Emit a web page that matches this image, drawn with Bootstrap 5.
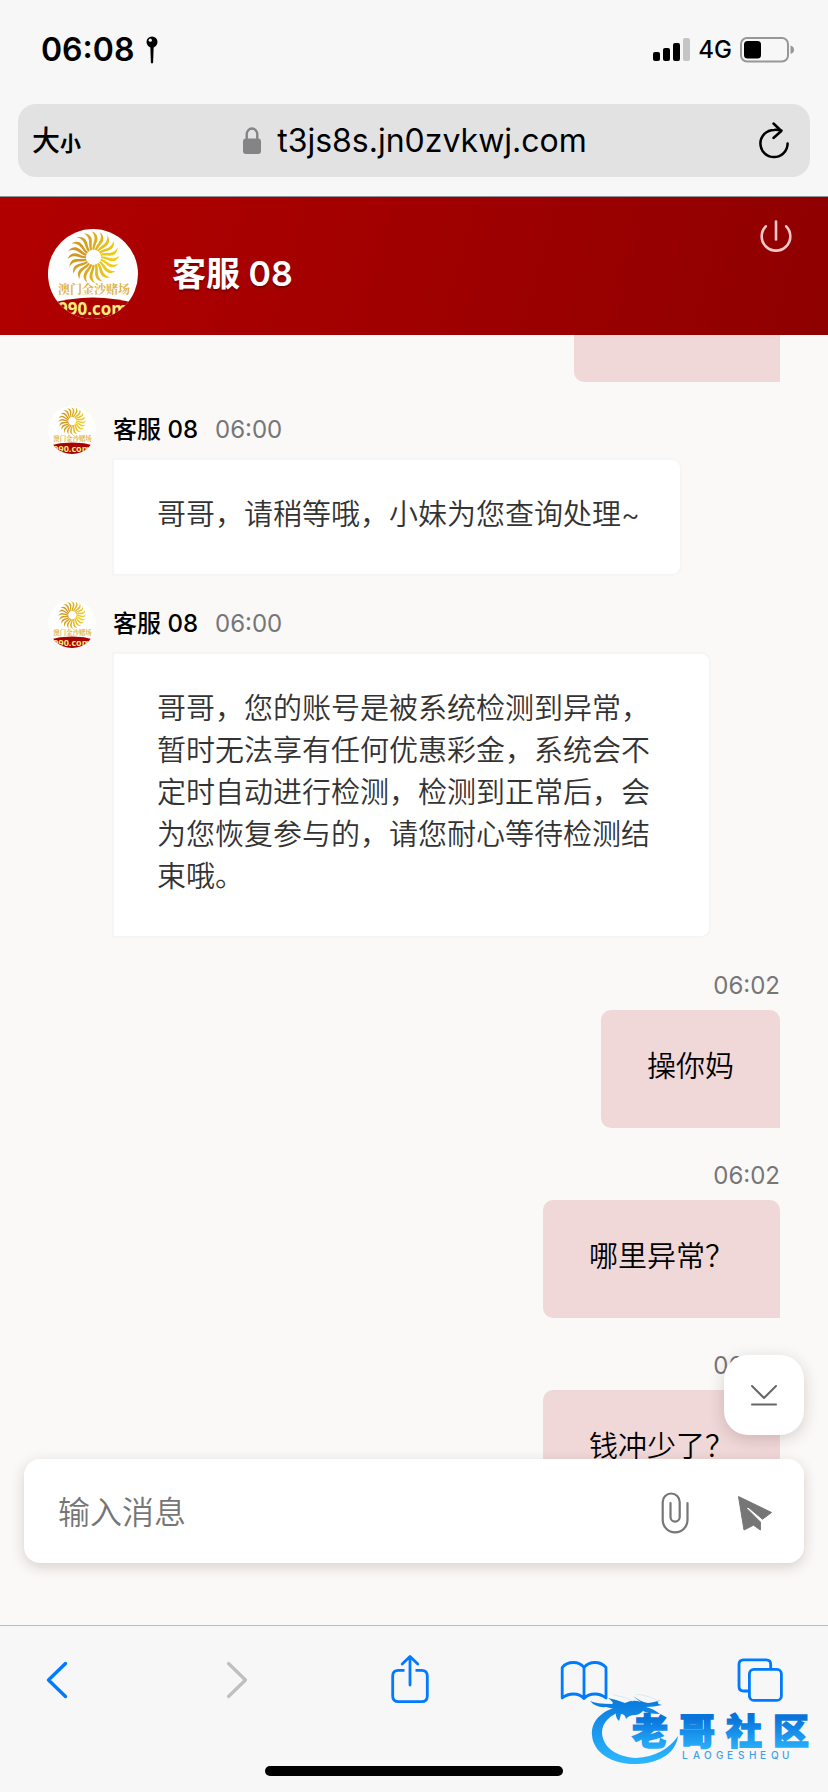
<!DOCTYPE html>
<html lang="zh-CN">
<head>
<meta charset="utf-8">
<meta name="viewport" content="width=device-width, initial-scale=1">
<title>客服 08</title>
<link rel="stylesheet" href="https://cdn.jsdelivr.net/npm/bootstrap@5.3.0/dist/css/bootstrap.min.css">
<style>
  body { font-family: Inter, "Noto Sans CJK SC", sans-serif; background: #f7f7f7; color: #000; }
  svg { display: block; flex: none; }
  .plain { border: 0; background: none; padding: 0; color: inherit; }

  /* Browser chrome */
  .status { height: 100px; padding: 0 34px 0 41px; }
  .status-left { gap: 12px; }
  .clock { font-size: 32px; line-height: 40px; font-weight: 600; }
  .network { font-size: 24px; line-height: 40px; font-weight: 500; }
  .address-wrap { padding: 4px 18px 19px; border-bottom: 1px solid #8f9496; }
  .address { display: grid; grid-template-columns: 1fr auto 1fr; height: 73px; padding: 0 20px 0 14px; border-radius: 18px; background: #e2e2e2; }
  .address-text { font-size: 32px; line-height: 40px; }
  .size-big { font-size: 28px; line-height: 40px; font-weight: 500; }
  .size-small { font-size: 21px; line-height: 40px; font-weight: 700; }

  /* Chat */
  .chat-head { padding: 32px 36px 16px 48px; background: linear-gradient(105deg, #b20000, #8f0000); }
  .chat-title { font-size: 34px; line-height: 40px; font-weight: 600; color: #fff; padding-left: 34px; text-shadow: 0 2px 2px rgba(0,0,0,.3); }
  .power { color: #efc9c9; margin-top: -11px; }
  .chat { background: #faf9f7; }
  .messages { padding: 0 48px; }
  .msg { margin-bottom: 24px; }
  .msg-agent { padding-left: 64px; }
  .msg-agent .msg-meta { height: 52px; margin-left: -64px; padding-bottom: 4px; gap: 17px; }
  .msg-user .msg-meta { height: 48px; }
  .agent-name { font-size: 24px; line-height: 32px; font-weight: 500; }
  .stamp { font-size: 24px; line-height: 32px; color: #767676; }
  .bubble { font-size: 29px; line-height: 42px; font-weight: 350; padding: 36px 46px 40px; border-radius: 10px; max-width: 599px; }
  .msg-agent .bubble { background: #fff; color: #333; border: 2px solid #f5f5f5; border-radius: 0 10px 10px 0; padding: 34px 40px 38px 43px; }
  .msg-user .bubble { background: #f0d8d8; border-bottom-right-radius: 0; }
  .bubble-tail { height: 47px; width: 206px; border-radius: 0 0 0 10px !important; padding: 0 !important; }
  .to-bottom { right: 24px; bottom: 24px; width: 80px; height: 80px; border-radius: 24px; background: #fff; color: #666; box-shadow: 0 4px 16px rgba(60,20,20,.18); }
  .composer { flex: none; height: 104px; margin: 0 24px 62px; padding: 4px 31px 0 34px; border-radius: 16px; background: #fff; color: #767676; box-shadow: 0 4px 14px rgba(60,20,20,.18); z-index: 1; }
  .composer input { border: 0; outline: 0; font-size: 32px; line-height: 48px; font-weight: 350; min-width: 0; padding: 0; }
  .composer input::placeholder { color: #767676; }

  /* Bottom toolbar */
  .toolbar { height: 167px; border-top: 1px solid #bdbcb9; padding: 30px 43px 0 32px; }
  .toolbar button { width: 50px; height: 50px; color: #007aff; }
  .toolbar button:disabled { color: #bfbfbf; }
  .home-bar { left: 32%; right: 32%; bottom: 16px; height: 10px; border-radius: 5px; background: #000; }
  .brand { right: 16px; bottom: 22px; pointer-events: none; }
</style>
</head>
<body>
<svg width="0" height="0" class="position-absolute" aria-hidden="true">
  <defs>
    <clipPath id="disc"><circle cx="45" cy="45" r="45"/></clipPath>
    <path id="ray" d="M-1 -7.500C-1.500 -12 1.500 -16 1 -20C.8 -22.500 -.5 -24.500 -1.800 -26C2 -24.500 4 -22 4 -19C4 -15 1.200 -12 1 -7.500Z"/>
    <symbol id="logo" viewBox="0 0 90 90">
      <g clip-path="url(#disc)">
        <rect width="90" height="90" fill="#fff"/>
        <g transform="translate(45.500 28.300)">
          <use href="#ray" fill="#dcae20"/>
          <use href="#ray" fill="#e0b61e" transform="rotate(18)"/>
          <use href="#ray" fill="#e5be1c" transform="rotate(36)"/>
          <use href="#ray" fill="#e9c51a" transform="rotate(54)"/>
          <use href="#ray" fill="#eccb18" transform="rotate(72)"/>
          <use href="#ray" fill="#eecf18" transform="rotate(90)"/>
          <use href="#ray" fill="#eecf18" transform="rotate(108)"/>
          <use href="#ray" fill="#ebc91a" transform="rotate(126)"/>
          <use href="#ray" fill="#e7c21c" transform="rotate(144)"/>
          <use href="#ray" fill="#e2ba1e" transform="rotate(162)"/>
          <use href="#ray" fill="#ddb120" transform="rotate(180)"/>
          <use href="#ray" fill="#d9a921" transform="rotate(198)"/>
          <use href="#ray" fill="#d6a322" transform="rotate(216)"/>
          <use href="#ray" fill="#d39e22" transform="rotate(234)"/>
          <use href="#ray" fill="#d19a22" transform="rotate(252)"/>
          <use href="#ray" fill="#d09822" transform="rotate(270)"/>
          <use href="#ray" fill="#d09822" transform="rotate(288)"/>
          <use href="#ray" fill="#d29c22" transform="rotate(306)"/>
          <use href="#ray" fill="#d5a122" transform="rotate(324)"/>
          <use href="#ray" fill="#d8a721" transform="rotate(342)"/>
        </g>
        <text x="10" y="65" font-size="12" font-weight="700" fill="#dcb44a" font-family="'Noto Serif CJK SC','Noto Sans CJK SC',serif">澳门金沙赌场</text>
        <path d="M0 75Q45 62 90 75V90H0Z" fill="#a90000"/>
        <text x="10" y="86" font-size="17" font-weight="700" fill="#ffee7a" font-family="'Open Sans',sans-serif">990.com</text>
      </g>
    </symbol>
  </defs>
</svg>

<div class="d-flex flex-column vh-100 overflow-hidden">
  <header>
    <div class="status d-flex align-items-center justify-content-between">
      <div class="status-left d-flex align-items-center">
        <span class="clock">06:08</span>
        <svg width="12" height="28" viewBox="0 0 12 28"><path d="M4.300 10h3.400l-.6 16.500q-1.100 2-2.200 0z"/><circle cx="6" cy="6" r="5.500"/><circle cx="4.300" cy="4.200" r="1.600" fill="#f7f7f7"/></svg>
      </div>
      <div class="d-flex align-items-center">
        <svg width="37" height="24" viewBox="0 0 37 24"><rect y="14" width="7" height="9" rx="2"/><rect x="10" y="10" width="7" height="13" rx="2"/><rect x="20" y="5" width="7" height="18" rx="2"/><rect x="30" width="7" height="23" rx="2" fill="#c5c5c5"/></svg>
        <span class="network ms-2 me-2">4G</span>
        <svg width="54" height="26" viewBox="0 0 54 26"><rect x="1" y="1" width="47" height="23.500" rx="6" fill="none" stroke="#979797" stroke-width="2"/><rect x="4" y="4" width="17" height="17.500" rx="3.500"/><path d="M50.500 8.500q3.500 1 3.500 4.200t-3.500 4.200z" fill="#979797"/></svg>
      </div>
    </div>
    <div class="address-wrap">
      <div class="address align-items-center">
        <button type="button" class="plain d-flex align-items-baseline pt-1" aria-label="大小"><span class="size-big">大</span><span class="size-small">小</span></button>
        <div class="d-flex align-items-center gap-3 ps-2">
          <svg width="18" height="27" viewBox="0 0 18 27"><path d="M3.700 13V7.500a5.300 6 0 0 1 10.600 0V13" fill="none" stroke="#848487" stroke-width="2.400"/><rect y="11.500" width="18" height="15.500" rx="3" fill="#848487"/></svg>
          <span class="address-text">t3js8s.jn0zvkwj.com</span>
        </div>
        <button type="button" class="plain ms-auto" aria-label="刷新">
          <svg width="32" height="38" viewBox="0 0 32 38" fill="none" stroke="#000" stroke-width="2.500" stroke-linecap="round" stroke-linejoin="round"><path d="M29.600 21.500A13.600 13.600 0 1 1 16 7.900Q20 7.700 23.500 8.500M15.500 1.500 23.300 9 15.500 16"/></svg>
        </button>
      </div>
    </div>
  </header>

  <div class="chat-head d-flex align-items-start">
    <svg width="90" height="90" role="img" aria-label="澳门金沙赌场"><use href="#logo"/></svg>
    <h1 class="chat-title mb-0 align-self-center">客服 08</h1>
    <button type="button" class="plain power ms-auto" aria-label="结束">
      <svg width="32" height="34" viewBox="0 0 32 34" fill="none" stroke="currentColor" stroke-width="2.600" stroke-linecap="round"><path d="M16 3.500V21.500M5.800 8.300A14.300 14.300 0 1 0 26.200 8.300"/></svg>
    </button>
  </div>

  <main class="chat flex-grow-1 d-flex flex-column overflow-hidden">
    <div class="position-relative flex-grow-1 overflow-hidden">
      <div class="messages">
        <div class="msg msg-user d-flex flex-column align-items-end"><div class="bubble bubble-tail"></div></div>

        <article class="msg msg-agent d-flex flex-column align-items-start">
          <div class="msg-meta d-flex align-items-center"><svg width="48" height="48"><use href="#logo"/></svg><span class="agent-name">客服 08</span><time class="stamp">06:00</time></div>
          <div class="bubble">哥哥，请稍等哦，小妹为您查询处理~</div>
        </article>

        <article class="msg msg-agent d-flex flex-column align-items-start">
          <div class="msg-meta d-flex align-items-center"><svg width="48" height="48"><use href="#logo"/></svg><span class="agent-name">客服 08</span><time class="stamp">06:00</time></div>
          <div class="bubble">哥哥，您的账号是被系统检测到异常，暂时无法享有任何优惠彩金，系统会不定时自动进行检测，检测到正常后，会为您恢复参与的，请您耐心等待检测结束哦。</div>
        </article>

        <article class="msg msg-user d-flex flex-column align-items-end">
          <div class="msg-meta d-flex align-items-center"><time class="stamp">06:02</time></div>
          <div class="bubble">操你妈</div>
        </article>

        <article class="msg msg-user d-flex flex-column align-items-end">
          <div class="msg-meta d-flex align-items-center"><time class="stamp">06:02</time></div>
          <div class="bubble">哪里异常？</div>
        </article>

        <article class="msg msg-user d-flex flex-column align-items-end">
          <div class="msg-meta d-flex align-items-center"><time class="stamp">06:02</time></div>
          <div class="bubble">钱冲少了？</div>
        </article>
      </div>
      <button type="button" class="plain to-bottom position-absolute d-flex align-items-center justify-content-center" aria-label="到底部">
        <svg width="28" height="24" viewBox="0 0 28 24" fill="none" stroke="currentColor" stroke-width="2" stroke-linecap="round" stroke-linejoin="round"><path d="M2 3 14 15 26 3M2 21.500H26"/></svg>
      </button>
    </div>
    <form class="composer position-relative d-flex align-items-center">
      <input type="text" class="flex-grow-1" placeholder="输入消息" aria-label="输入消息">
      <button type="button" class="plain ms-3 me-5" aria-label="附件">
        <svg width="28" height="42" viewBox="0 0 28 42" fill="none" stroke="currentColor" stroke-width="2.200" stroke-linecap="round"><path d="M26.500 11V28A12.400 12.400 0 0 1 1.700 28V10A8.500 8.500 0 0 1 18.700 10V25A4.600 4.600 0 0 1 9.500 25V11"/></svg>
      </button>
      <button type="submit" class="plain" aria-label="发送">
        <svg width="36" height="36" viewBox="0 0 36 36" fill="currentColor" stroke="currentColor" stroke-linejoin="round"><path d="M1.500 1.500 34.500 17.500 25.500 24.200 11 12 9.800 13.400 23.400 27V35L16.500 30.200 7 35Z"/></svg>
      </button>
    </form>
  </main>

  <footer class="position-relative flex-shrink-0">
    <nav class="toolbar d-flex justify-content-between align-items-start" aria-label="浏览器">
      <button type="button" class="plain" aria-label="后退"><svg width="50" height="50" viewBox="0 0 50 50" fill="none" stroke="currentColor" stroke-width="3.400" stroke-linecap="round" stroke-linejoin="round"><path d="M33.500 7.500 16.500 24 33.500 40.500"/></svg></button>
      <button type="button" class="plain" aria-label="前进" disabled><svg width="50" height="50" viewBox="0 0 50 50" fill="none" stroke="currentColor" stroke-width="3.200" stroke-linecap="round" stroke-linejoin="round"><path d="M20.500 7.500 37.500 24 20.500 40.500"/></svg></button>
      <button type="button" class="plain" aria-label="分享"><svg width="50" height="50" viewBox="0 0 50 50" overflow="visible" fill="none" stroke="currentColor" stroke-width="2.800" stroke-linecap="round" stroke-linejoin="round"><path d="M26 29V1M18.200 8 26 .5 33.800 8"/><path stroke-linecap="butt" d="M20.500 14.300H14.500Q8.700 14.300 8.700 20V40Q8.700 45.700 14.500 45.700H37.500Q43.300 45.700 43.300 40V20Q43.300 14.300 37.500 14.300H31.500"/></svg></button>
      <button type="button" class="plain" aria-label="书签"><svg width="50" height="50" viewBox="0 0 50 50" fill="none" stroke="currentColor" stroke-width="2.800" stroke-linecap="round" stroke-linejoin="round"><path d="M25 11.500Q21 6.500 14.500 6.500 7 6.500 3.200 11.500V42Q8 38 14.500 38 21 38 25 42.500 29 38 36 38 42 38 47 42V11.500Q42.500 6.500 36 6.500 29 6.500 25 11.500V42.500"/></svg></button>
      <button type="button" class="plain" aria-label="标签页"><svg width="50" height="50" viewBox="0 0 50 50" fill="none" stroke="currentColor" stroke-width="2.800"><rect x="14.400" y="13.400" width="32" height="31" rx="4.500"/><path d="M35.700 13V8.400Q35.700 3.800 31.200 3.800H8.500Q4 3.800 4 8.400V30.500Q4 35 8.500 35H14"/></svg></button>
    </nav>
    <div class="home-bar position-absolute"></div>
    <svg class="brand position-absolute" width="226" height="76" viewBox="0 0 226 76" role="img" aria-label="老哥社区">
      <defs>
        <linearGradient id="sea" gradientUnits="userSpaceOnUse" x1="0" y1="4" x2="0" y2="70"><stop offset="0" stop-color="#0878dc"/><stop offset="1" stop-color="#2bb8ff"/></linearGradient>
        <linearGradient id="word" gradientUnits="userSpaceOnUse" x1="0" y1="24" x2="0" y2="54"><stop offset="0" stop-color="#0873da"/><stop offset="1" stop-color="#28aefa"/></linearGradient>
      </defs>
      <g fill="url(#sea)">
        <path d="M34 12C14 17 5 28 6 41 7 59 27 71 51 70 75 69 90 58 92 42 83 55 69 63 50 64 31 63 17 54 16 39 16 28 24 21 38 16Z"/>
        <path d="M4 7Q10 10 26 10Q29 9 22 4Q32 6 39 9Q47 5 55 8Q50 5 47 2Q55 8 62 9Q70 8 74 6Q69 10 76 11Q68 13 60 13Q68 15 74 20Q62 20 57 17Q53 21 49 21Q43 21 40 25Q39 20 35 20Q34 24 33 27Q28 22 31 17Q27 14 20 13Q10 14 4 7Z"/>
        <path d="M28 1Q40 3 47 7M50 0Q66 2 73 8" fill="none" stroke="#d5ebf8" stroke-width="1"/>
      </g>
      <text y="51" x="46 93 140 187" font-size="36" font-weight="900" fill="url(#word)" stroke="url(#word)" stroke-width="1.500" font-family="'Noto Sans CJK SC',sans-serif">老哥社区</text>
      <text y="65" x="96 107 118 130 141 152 163 174 185 196" font-size="10" font-weight="500" fill="#3ba0e6" font-family="Inter,sans-serif">LAOGESHEQU</text>
    </svg>
  </footer>
</div>
<script src="https://cdn.jsdelivr.net/npm/bootstrap@5.3.0/dist/js/bootstrap.bundle.min.js"></script>
</body>
</html>
